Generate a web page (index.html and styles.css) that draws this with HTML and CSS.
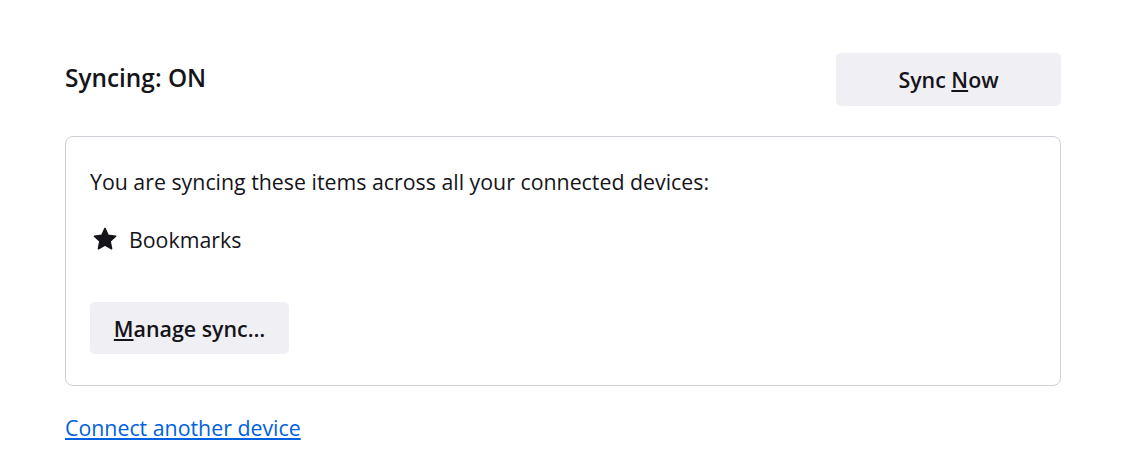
FILE: index.html
```html
<!DOCTYPE html>
<html>
<head>
<meta charset="utf-8">
<link rel="stylesheet" href="styles.css">
</head>
<body>
<div class="page">
  <div class="header">
    <h1 class="title">Syncing: ON</h1>
    <button class="btn sync-now">Sync <u>N</u>ow</button>
  </div>
  <div class="card">
    <p class="card-text">You are syncing these items across all your connected devices:</p>
    <div class="item">
      <svg class="star" viewBox="0 0 16 16" width="24" height="24"><path d="M8 0.9l2.1 4.6 5 .6-3.7 3.4 1 5-4.4-2.5-4.4 2.5 1-5L0.9 6.1l5-.6z" fill="#15141a" stroke="#15141a" stroke-width="1" stroke-linejoin="round"/></svg>
      <span>Bookmarks</span>
    </div>
    <button class="btn manage"><u>M</u>anage sync…</button>
  </div>
  <a class="link" href="#">Connect another device</a>
</div>
</body>
</html>
```
FILE: styles.css
```css
html, body { margin: 0; padding: 0; background: #fff; }
body { font-family: "Open Sans", "Noto Sans", sans-serif; color: #15141a; }
.page { width: 996px; padding: 53px 0 0 65px; }
.header { display: flex; justify-content: space-between; align-items: flex-start; }
.title { margin: 0; padding-top: 9px; font-size: 24.4px; font-weight: 600; line-height: 32px; }
.btn { font-family: inherit; background: #f0f0f4; border: none; border-radius: 5px; color: #15141a; font-size: 21.4px; font-weight: 600; cursor: pointer; padding: 0; }
.sync-now { width: 225px; height: 53px; }
.card { margin-top: 30px; border: 1px solid #cfcfd8; border-radius: 8px; padding: 24px 24px 30px 24px; height: 194px; }
.card-text { margin: 0; font-size: 21.33px; line-height: 42px; }
.item { display: flex; align-items: center; gap: 12px; margin-top: 20px; font-size: 21.33px; height: 32px; padding-left: 3px; }
.star { flex: none; }
.manage { margin-top: 47px; width: 199px; height: 52px; }
.link { display: inline-block; margin-top: 27px; font-size: 21.33px; color: #0061e0; text-decoration: underline; }
```
